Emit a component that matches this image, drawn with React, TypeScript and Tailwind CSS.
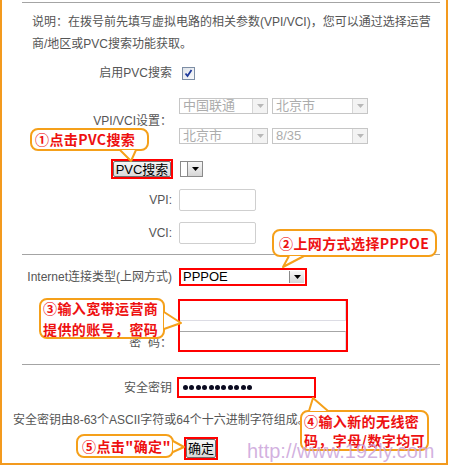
import React from 'react';

const ORANGE = '#f5a01a';

const Arrow = ({ disabled }: { disabled?: boolean }) => (
  <div
    className={`flex h-full w-[15px] shrink-0 items-center justify-center border-l ${
      disabled ? 'border-[#d6d6d6] bg-[#f3f3f3]' : 'border-[#8a8a8a] bg-gradient-to-b from-[#f8f8f8] to-[#d6d6d6]'
    }`}
  >
    <svg width="7" height="4" viewBox="0 0 7 4">
      <path d="M0 0H7L3.5 4Z" fill={disabled ? '#b8b8b8' : '#000'} />
    </svg>
  </div>
);

const DisabledSelect = ({ value, width }: { value: string; width: string }) => (
  <div className={`flex h-[16px] ${width} border border-[#c6c6c6] bg-white`}>
    <span className="flex-1 pl-[3px] text-[13px] leading-[14px] text-[#acacac]">{value}</span>
    <Arrow disabled />
  </div>
);

const Row = ({
  label,
  children,
  className = '',
}: {
  label: React.ReactNode;
  children?: React.ReactNode;
  className?: string;
}) => (
  <div className={`flex items-center ${className}`}>
    <div className="flex w-[170px] shrink-0 justify-end whitespace-nowrap text-[12px] text-[#555]">{label}</div>
    <div className="ml-[7px] flex items-center">{children}</div>
  </div>
);

const Line = ({ className = '' }: { className?: string }) => (
  <div className={`ml-[20px] h-px w-[418px] bg-[#a4a4a4] ${className}`} />
);

// callout frames: rect + tail (base1, tip, base2)
const callouts = [
  { x: 31, y: 129, w: 117, h: 21, tail: [[120, 150], [131, 161], [136, 150]] },
  { x: 273, y: 230, w: 163, h: 26, tail: [[289, 256], [283, 267], [304, 256]] },
  { x: 40, y: 299, w: 124, h: 39, tail: [[164, 312], [181, 323], [164, 329]] },
  { x: 301, y: 411, w: 127, h: 39, tail: [[309, 411], [313, 398], [328, 411]] },
  { x: 77, y: 435, w: 96, h: 22, tail: [[173, 441], [184, 447], [173, 452]] },
];

export default function App() {
  return (
    <div className="relative h-[467px] w-[449px] overflow-hidden bg-white font-['Liberation_Sans','Noto_Sans_CJK_SC',sans-serif]">
      <div className="flex h-[465px] w-[448px] flex-col border-x-2 border-b-2 border-[#f39a1e]">
        <Line className="mt-[2px]" />

        <p className="ml-[30px] mt-[8px] whitespace-nowrap text-[12px] leading-[22px] text-[#555]">
          说明：在拨号前先填写虚拟电路的相关参数(VPI/VCI)，您可以通过选择运营
          <br />
          商/地区或PVC搜索功能获取。
        </p>

        <Row label="启用PVC搜索" className="mt-[7px] h-[22px]">
          <div className="ml-[3px] flex h-[13px] w-[13px] items-center justify-center border border-[#7d8ea5] bg-gradient-to-br from-[#dfe4ea] to-[#f8f9fb]">
            <svg width="9" height="9" viewBox="0 0 9 9">
              <path d="M1.5 4.5L3.5 7L7.5 1" stroke="#1f3a9c" strokeWidth="1.8" fill="none" />
            </svg>
          </div>
        </Row>

        <Row label="VPI/VCI设置：" className="mt-[14px]">
          <div className="flex flex-col gap-[14px]">
            <div className="flex gap-[4px]">
              <DisabledSelect value="中国联通" width="w-[89px]" />
              <DisabledSelect value="北京市" width="w-[96px]" />
            </div>
            <div className="flex gap-[4px]">
              <DisabledSelect value="北京市" width="w-[89px]" />
              <DisabledSelect value="8/35" width="w-[96px]" />
            </div>
          </div>
        </Row>

        <Row
          className="mt-[15px] h-[20px]"
          label={
            <div className="mr-[-1px] flex h-[20px] w-[62px] items-center justify-center border-2 border-[#ff0000]">
              <div className="flex h-[16px] w-[58px] items-center justify-center rounded-[2px] border border-[#707070] bg-gradient-to-b from-[#f6f6f6] to-[#dadada] text-[13px] leading-none text-black">
                PVC搜索
              </div>
            </div>
          }
        >
          <div className="ml-px flex h-[16px] w-[23px] border border-[#8a8a8a] bg-white">
            <div className="flex-1" />
            <Arrow />
          </div>
        </Row>

        <Row label="VPI:" className="mt-[10px] h-[22px]">
          <div className="h-[22px] w-[77px] rounded-[2px] border border-[#cfcfcf] bg-white" />
        </Row>

        <Row label="VCI:" className="mt-[11px] h-[22px]">
          <div className="h-[22px] w-[77px] rounded-[2px] border border-[#cfcfcf] bg-white" />
        </Row>

        <Line className="mt-[10px]" />

        <Row label="Internet连接类型(上网方式)" className="mt-[13px] h-[18px]">
          <div className="flex h-[18px] w-[128px] border-2 border-[#ff0000] bg-white pr-px">
            <span className="flex-1 pl-[2px] text-[13px] leading-[14px] text-black">PPPOE</span>
            <div className="my-px flex">
              <Arrow />
            </div>
          </div>
        </Row>

        <div className="mt-[13px] flex">
          <div className="flex w-[170px] shrink-0 flex-col items-end text-[12px] text-[#555]">
            <div className="mt-[1px] h-[20px] leading-[16px]">用户名：</div>
            <div className="mt-[15px] leading-[16px]">密&nbsp;&nbsp;码：</div>
          </div>
          <div className="ml-[6px] flex h-[53px] w-[170px] flex-col border-2 border-[#ff0000] bg-white">
            <div className="h-[20px] border-b border-r border-[#dcdce4]" />
            <div className="h-[10px]" />
            <div className="h-[19px] border-r border-t border-[#a6a6a6] border-r-[#dcdce4]" />
          </div>
        </div>

        <Line className="mt-[12px]" />

        <Row label="安全密钥" className="mt-[12px] h-[21px]">
          <div className="ml-[-2px] flex h-[21px] w-[139px] items-center gap-[1.4px] border-2 border-[#ff0000] bg-white pl-[4px]">
            {Array.from({ length: 11 }).map((_, i) => (
              <span key={i} className="h-[5px] w-[5px] rounded-full bg-[#0b0b20]" />
            ))}
          </div>
        </Row>

        <div className="ml-[11px] mt-[12px] h-[20px] whitespace-nowrap text-[12px] leading-[20px] text-[#555]">
          安全密钥由8-63个ASCII字符或64个十六进制字符组成。
        </div>

        <div className="ml-[182px] mt-[7px] flex h-[23px] w-[34px] items-center justify-center border-2 border-[#ff0000]">
          <div className="flex h-[19px] w-[30px] items-center justify-center rounded-[2px] border border-[#707070] bg-gradient-to-b from-[#f6f6f6] to-[#d8d8d8] text-[13px] leading-none text-black">
            确定
          </div>
        </div>
      </div>

      {/* callout bubbles */}
      <svg className="pointer-events-none absolute left-0 top-0" width="449" height="467">
        {callouts.map((c, i) => (
          <g key={i}>
            <rect x={c.x} y={c.y} width={c.w} height={c.h} rx="7" fill="#fff" stroke={ORANGE} strokeWidth="2" />
            <polygon points={c.tail.map((p) => p.join(',')).join(' ')} fill="#fff" />
            <polyline points={c.tail.map((p) => p.join(',')).join(' ')} fill="none" stroke={ORANGE} strokeWidth="2" strokeLinejoin="round" />
          </g>
        ))}
      </svg>

      <div className="absolute inset-0 whitespace-nowrap font-['Noto_Sans_CJK_SC',sans-serif] text-[14px] font-bold leading-[20px] tracking-[0.4px] text-[#ee1111]">
        <div className="absolute left-[35px] top-[129px]">①点击PVC搜索</div>
        <div className="absolute left-[279px] top-[233px]">②上网方式选择PPPOE</div>
        <div className="absolute left-[43px] top-[298px] leading-[21px]">
          ③输入宽带运营商
          <br />
          提供的账号，密码
        </div>
        <div className="absolute left-[304px] top-[412px] leading-[19px]">
          ④输入新的无线密
          <br />
          码，字母/数字均可
        </div>
        <div className="absolute left-[82px] top-[436px]">⑤点击"确定"</div>
      </div>

      <div className="pointer-events-none absolute left-[247px] top-[441px] font-['Liberation_Sans',sans-serif] text-[20px] leading-[20px] text-[#cba3da]/85">
        http://www.192ly.com
      </div>
    </div>
  );
}
